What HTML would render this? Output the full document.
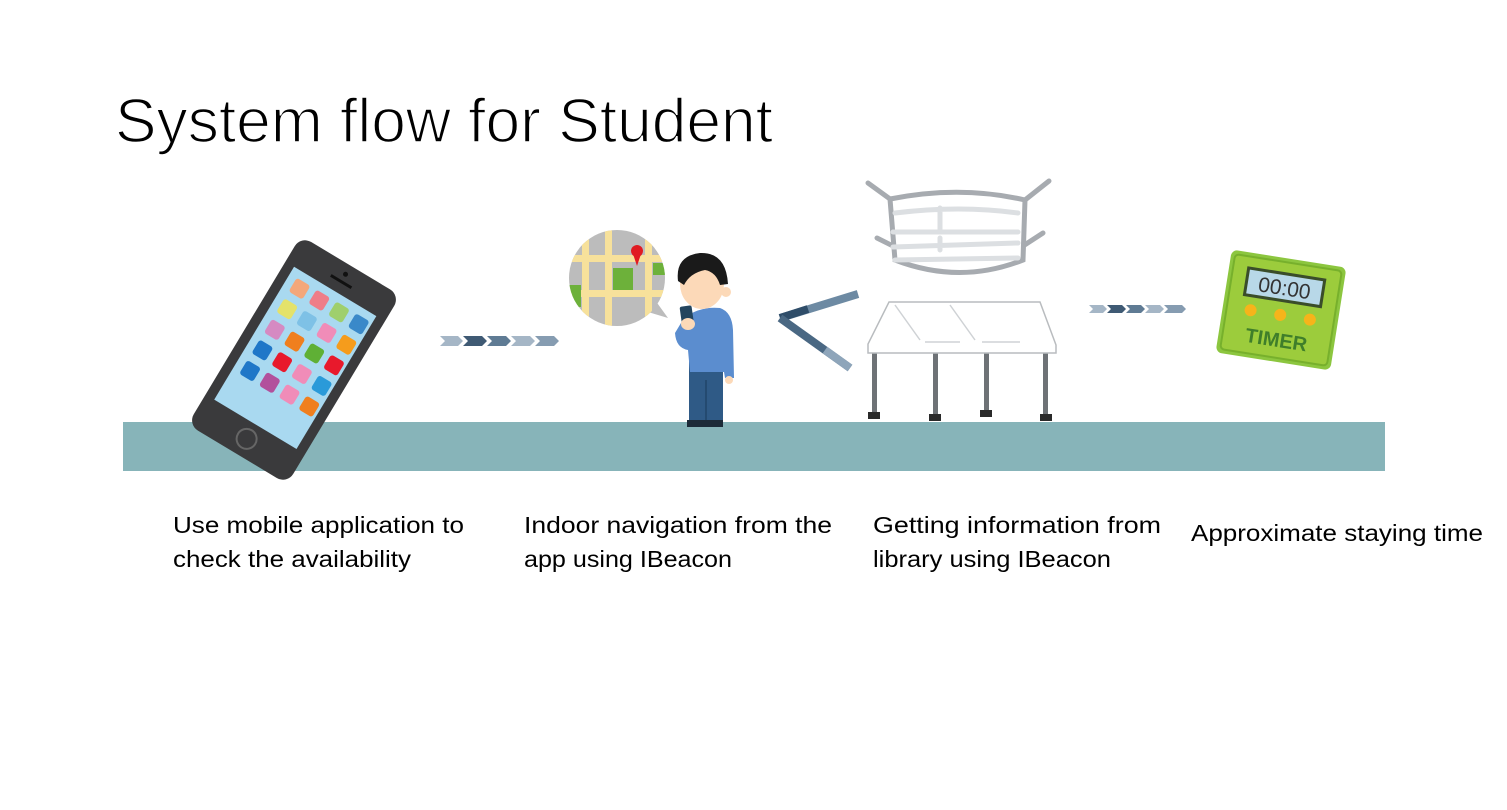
<!DOCTYPE html>
<html><head><meta charset="utf-8"><style>
html,body{margin:0;padding:0;background:#fff;width:1507px;height:810px;overflow:hidden}
svg{display:block}
text{font-family:"Liberation Sans",sans-serif;fill:#000}
</style></head><body>
<svg width="1507" height="810" viewBox="0 0 1507 810" xmlns="http://www.w3.org/2000/svg">
<text x="115" y="142" font-size="62" textLength="658" lengthAdjust="spacingAndGlyphs" stroke="#fff" stroke-width="1.6">System flow for Student</text>

<rect x="123" y="422" width="1262" height="49" fill="#87b4b9"/>

<g transform="translate(294,360) rotate(31)">
  <rect x="-58" y="-110" width="116" height="220" rx="12" fill="#3a3a3c"/>
  <rect x="-48" y="-80" width="96" height="155" fill="#a9d9f0"/>
  <circle cx="0" cy="92" r="10" fill="none" stroke="#666" stroke-width="2"/>
  <rect x="-12" y="-93" width="24" height="3" fill="#111"/>
  <circle cx="0" cy="-100" r="2.5" fill="#111"/>
  <g>
    <rect x="-40" y="-72" width="16" height="16" rx="3" fill="#f4a77a"/>
    <rect x="-17" y="-72" width="16" height="16" rx="3" fill="#ef7d88"/>
    <rect x="6" y="-72" width="16" height="16" rx="3" fill="#9fcf6d"/>
    <rect x="29" y="-72" width="16" height="16" rx="3" fill="#3a89c9"/>
    <rect x="-40" y="-48" width="16" height="16" rx="3" fill="#e4e26a"/>
    <rect x="-17" y="-48" width="16" height="16" rx="3" fill="#7ec1e6"/>
    <rect x="6" y="-48" width="16" height="16" rx="3" fill="#f08cb8"/>
    <rect x="29" y="-48" width="16" height="16" rx="3" fill="#f59c1c"/>
    <rect x="-40" y="-24" width="16" height="16" rx="3" fill="#d58ac2"/>
    <rect x="-17" y="-24" width="16" height="16" rx="3" fill="#f07f1e"/>
    <rect x="6" y="-24" width="16" height="16" rx="3" fill="#5fb035"/>
    <rect x="29" y="-24" width="16" height="16" rx="3" fill="#e8192c"/>
    <rect x="-40" y="0" width="16" height="16" rx="3" fill="#1f77c8"/>
    <rect x="-17" y="0" width="16" height="16" rx="3" fill="#e8192c"/>
    <rect x="6" y="0" width="16" height="16" rx="3" fill="#f08cb8"/>
    <rect x="29" y="0" width="16" height="16" rx="3" fill="#2a9ad9"/>
    <rect x="-40" y="24" width="16" height="16" rx="3" fill="#1f77c8"/>
    <rect x="-17" y="24" width="16" height="16" rx="3" fill="#b2509c"/>
    <rect x="6" y="24" width="16" height="16" rx="3" fill="#f08cb8"/>
    <rect x="29" y="24" width="16" height="16" rx="3" fill="#f07f1e"/>
  </g>
</g>

<g transform="translate(440,341)">
  <polygon points="0,-5 18,-5 23,0 18,5 0,5 5,0" fill="#a5b6c6"/>
  <polygon points="23,-5 42,-5 47,0 42,5 23,5 28,0" fill="#3f5a74"/>
  <polygon points="47,-5 66,-5 71,0 66,5 47,5 52,0" fill="#5f7b94"/>
  <polygon points="71,-5 90,-5 95,0 90,5 71,5 76,0" fill="#a5b6c6"/>
  <polygon points="95,-5 114,-5 119,0 114,5 95,5 100,0" fill="#869cb1"/>
</g>

<defs><clipPath id="mc"><circle cx="617" cy="278" r="48"/></clipPath></defs>
<polygon points="655,300 668,318 648,312" fill="#bcbcbc"/>
<g clip-path="url(#mc)">
  <rect x="565" y="225" width="110" height="110" fill="#bcbcbc"/>
  <rect x="565" y="255" width="110" height="7" fill="#f7e19b"/>
  <rect x="565" y="290" width="110" height="7" fill="#f7e19b"/>
  <rect x="582" y="225" width="7" height="110" fill="#f7e19b"/>
  <rect x="605" y="225" width="7" height="110" fill="#f7e19b"/>
  <rect x="645" y="225" width="7" height="110" fill="#f7e19b"/>
  <rect x="613" y="268" width="20" height="22" fill="#6db13a"/>
  <rect x="653" y="263" width="20" height="12" fill="#6db13a"/>
  <rect x="565" y="285" width="16" height="22" fill="#6db13a"/>
</g>
<circle cx="637" cy="251" r="6" fill="#e01b22"/>
<polygon points="633,254 641,254 637,266" fill="#e01b22"/>

<rect x="689" y="360" width="34" height="64" fill="#2f5a86"/>
<rect x="705" y="380" width="2" height="44" fill="#244a70"/>
<rect x="687" y="420" width="18" height="7" fill="#1c2a38"/>
<rect x="705" y="420" width="18" height="7" fill="#1c2a38"/>
<path d="M684,318 Q700,306 720,308 Q732,312 733,330 L734,378 L725,378 L724,372 L690,372 L688,350 Q676,348 675,333 Z" fill="#5b8dcf"/>
<circle cx="729" cy="380" r="4" fill="#fcd9b8"/>
<ellipse cx="702" cy="284" rx="22" ry="25" fill="#fcd9b8"/>
<circle cx="726" cy="292" r="5" fill="#fcd9b8"/>
<path d="M678,281 Q675,256 700,253 Q726,252 728,284 L720,285 Q716,272 705,270 Q690,273 684,285 Z" fill="#1a1a1a"/>
<rect x="681" y="306" width="12" height="22" rx="2" fill="#24455e" transform="rotate(-8 687 317)"/>
<ellipse cx="688" cy="324" rx="7" ry="6" fill="#fcd9b8"/>

<g stroke-width="8" stroke-linecap="butt">
  <line x1="858" y1="294" x2="780" y2="318" stroke="#6d8aa3"/>
  <line x1="808" y1="309" x2="780" y2="318" stroke="#2f4d69"/>
  <line x1="780" y1="318" x2="850" y2="368" stroke="#4a6883"/>
  <line x1="825" y1="350" x2="850" y2="368" stroke="#8ea5ba"/>
</g>

<g fill="none" stroke="#a7abb0" stroke-width="5" stroke-linecap="round">
  <path d="M868,183 L890,199 M1049,181 L1025,200 M877,238 L895,247 M1043,233 L1023,246"/>
  <path d="M890,199 Q960,185 1025,200 L1023,260 Q960,285 895,260 Z" fill="#fff"/>
</g>
<g fill="none" stroke="#dcdfe2" stroke-width="5" stroke-linecap="round">
  <path d="M895,213 Q960,205 1018,213 M893,232 L1018,232 M893,247 L1018,243 M895,260 L1018,258 M940,208 L940,230 M940,238 L940,250"/>
</g>

<g fill="#6e7276">
  <rect x="872" y="352" width="5" height="66"/><rect x="933" y="352" width="5" height="66"/>
  <rect x="984" y="352" width="5" height="62"/><rect x="1043" y="352" width="5" height="66"/>
</g>
<g fill="#2a2a2a">
  <rect x="868" y="412" width="12" height="7"/><rect x="929" y="414" width="12" height="7"/>
  <rect x="980" y="410" width="12" height="7"/><rect x="1040" y="414" width="12" height="7"/>
</g>
<path d="M889,302 L1040,302 L1056,345 L1056,353 L868,353 L868,344 Z" fill="#fff" stroke="#b9bcbf" stroke-width="1.5"/>
<path d="M895,305 L920,340 M950,305 L975,340 M925,342 L960,342 M982,342 L1020,342" stroke="#cfd2d5" stroke-width="1.5"/>

<g transform="translate(1089,309)">
  <polygon points="0,-4 14,-4 18,0 14,4 0,4 4,0" fill="#a5b6c6"/>
  <polygon points="18,-4 33,-4 37,0 33,4 18,4 22,0" fill="#3f5a74"/>
  <polygon points="37,-4 52,-4 56,0 52,4 37,4 41,0" fill="#5f7b94"/>
  <polygon points="56,-4 71,-4 75,0 71,4 56,4 60,0" fill="#a5b6c6"/>
  <polygon points="75,-4 93,-4 97,0 93,4 75,4 79,0" fill="#869cb1"/>
</g>

<g transform="translate(1281,310) rotate(9)">
  <rect x="-58" y="-52" width="116" height="104" rx="6" fill="#8cc63f"/>
  <rect x="-54" y="-48" width="108" height="96" rx="4" fill="#9ccc3c" stroke="#77b02c" stroke-width="2"/>
  <rect x="-40" y="-38" width="80" height="30" fill="#3a4d2a"/>
  <rect x="-37" y="-35" width="74" height="24" fill="#b8d8e8"/>
  <text x="0" y="-15" font-size="21" text-anchor="middle" style="fill:#333">00:00</text>
  <circle cx="-30" cy="5" r="6" fill="#f6b41a"/><circle cx="0" cy="5" r="6" fill="#f6b41a"/><circle cx="30" cy="5" r="6" fill="#f6b41a"/>
  <text x="0" y="37" font-size="20" font-weight="bold" text-anchor="middle" style="fill:#3f7e2a">TIMER</text>
</g>

<g font-size="23">
<text x="173" y="533" textLength="291" lengthAdjust="spacingAndGlyphs">Use mobile application to</text>
<text x="173" y="567" textLength="238" lengthAdjust="spacingAndGlyphs">check the availability</text>
<text x="524" y="533" textLength="308" lengthAdjust="spacingAndGlyphs">Indoor navigation from the</text>
<text x="524" y="567" textLength="208" lengthAdjust="spacingAndGlyphs">app using IBeacon</text>
<text x="873" y="533" textLength="288" lengthAdjust="spacingAndGlyphs">Getting information from</text>
<text x="873" y="567" textLength="238" lengthAdjust="spacingAndGlyphs">library using IBeacon</text>
<text x="1191" y="541" textLength="292" lengthAdjust="spacingAndGlyphs">Approximate staying time</text>
</g>
</svg>
</body></html>
